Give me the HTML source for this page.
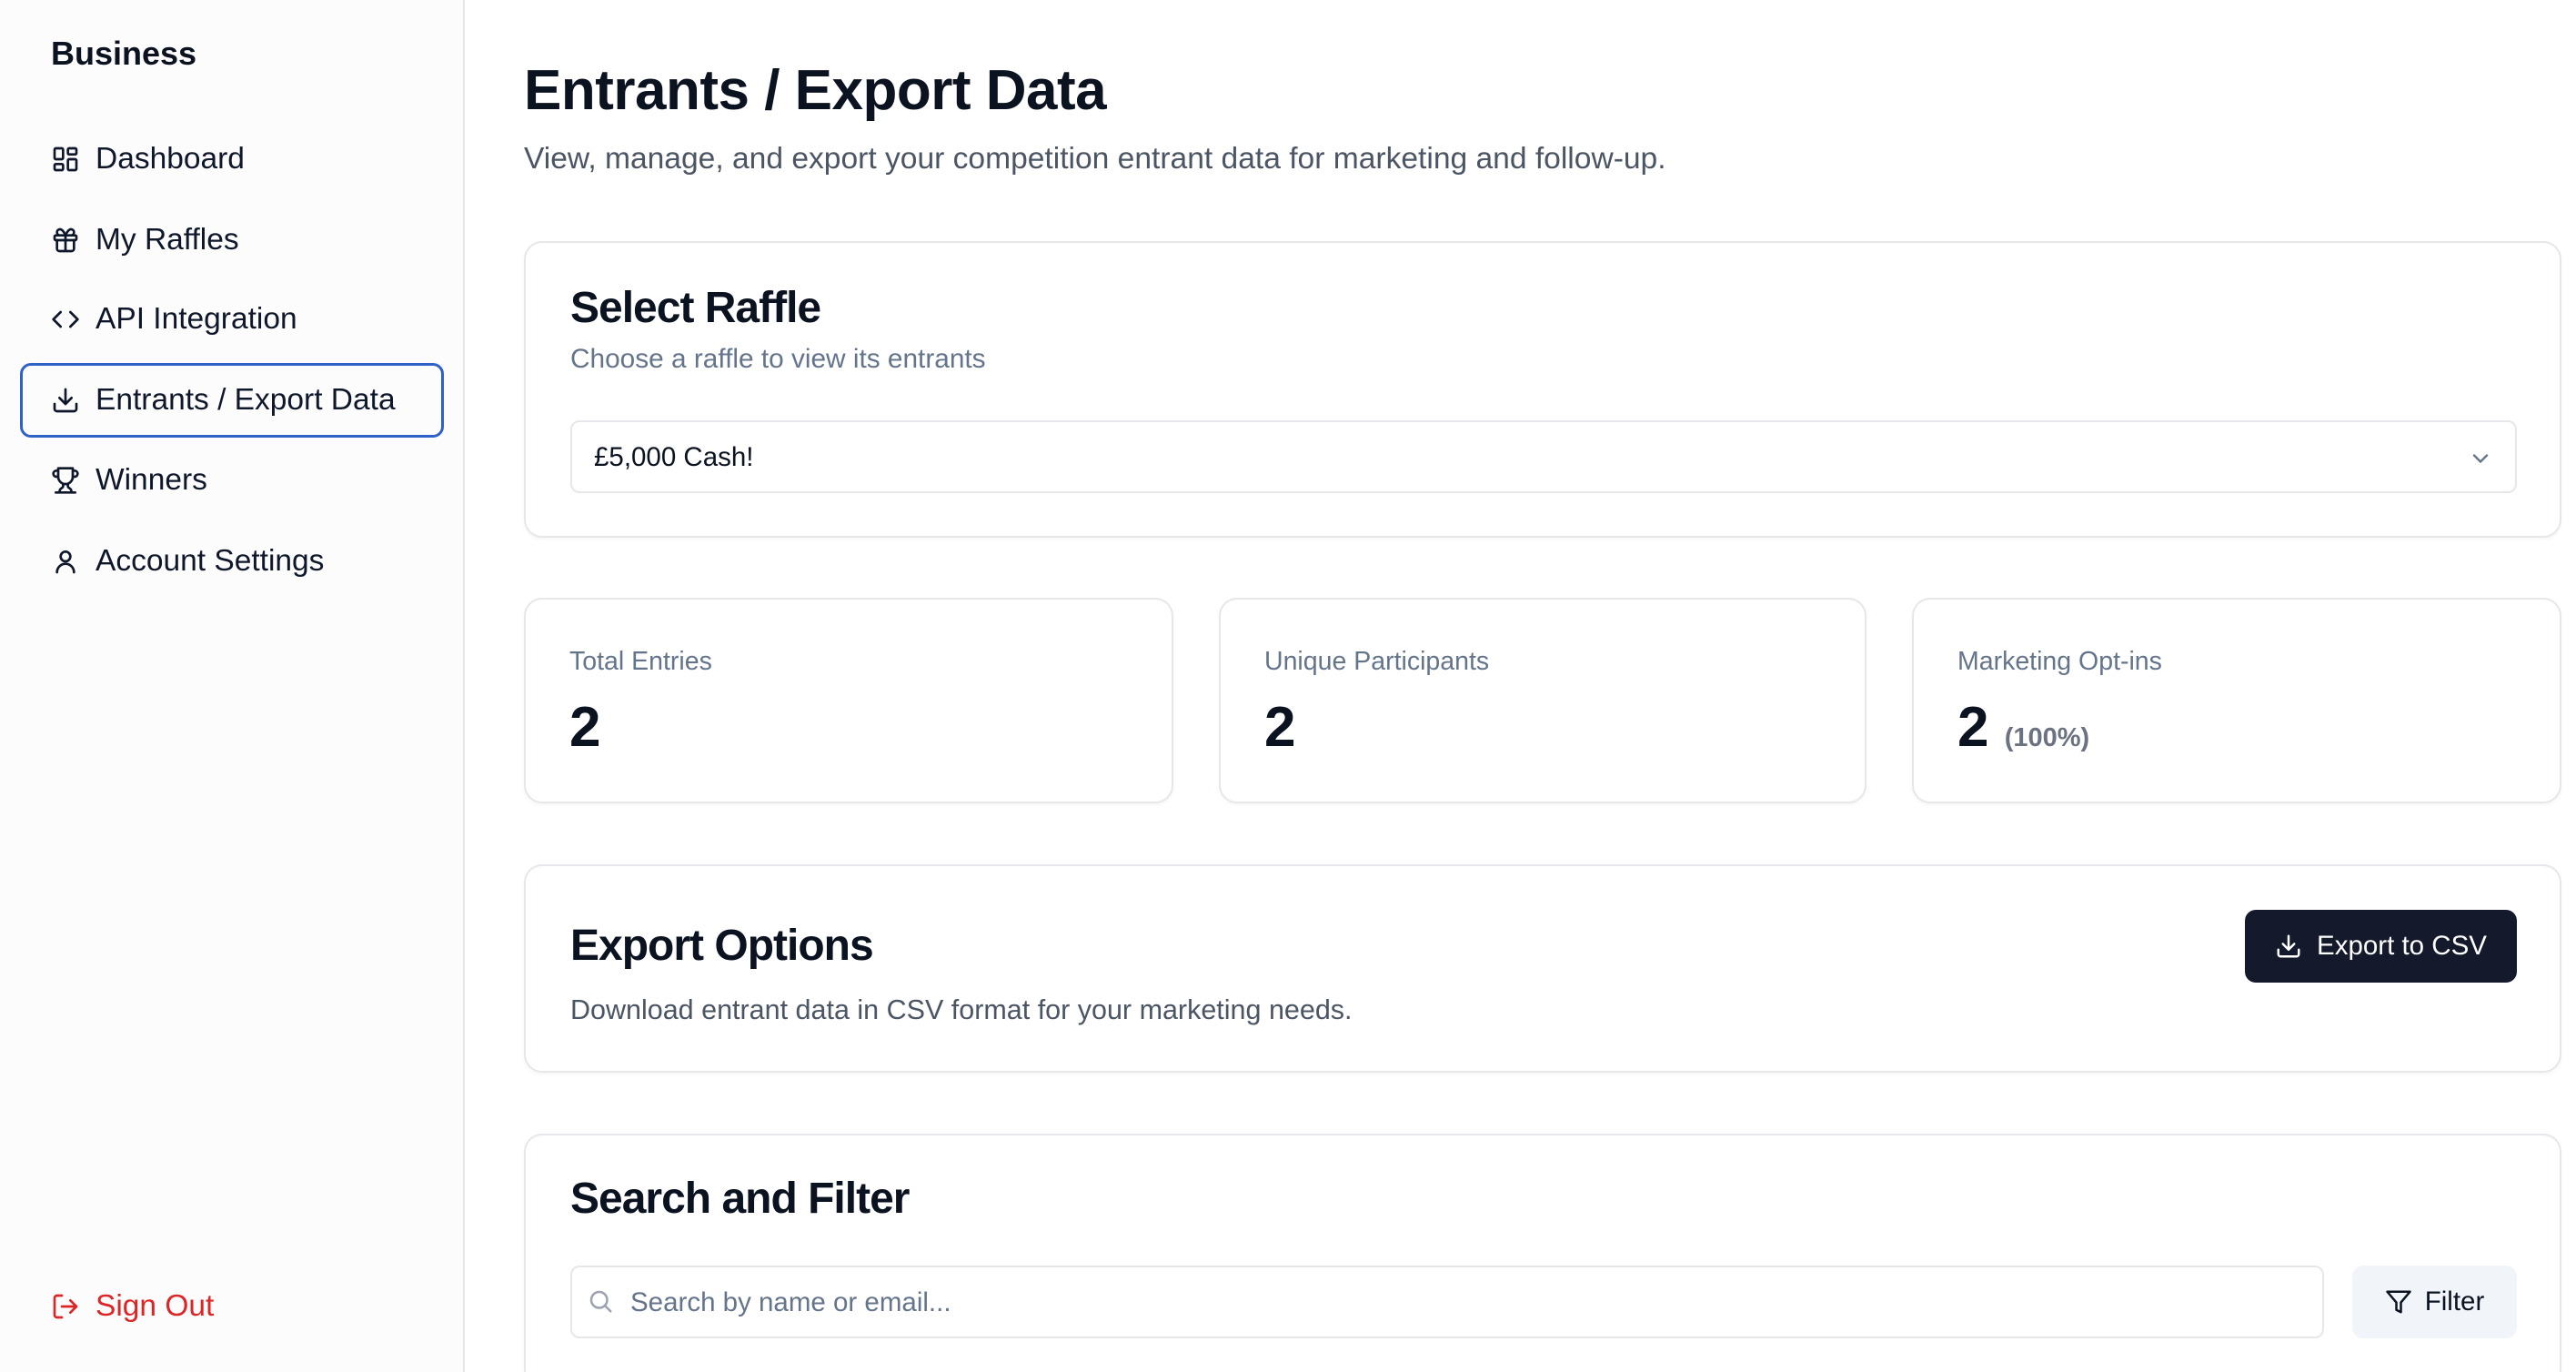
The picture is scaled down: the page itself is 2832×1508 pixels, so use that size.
<!DOCTYPE html>
<html style="width:2832px;height:1508px;overflow:hidden"><head><meta charset="utf-8"><style>
*{margin:0;padding:0;box-sizing:border-box}
body{width:2832px;height:1508px;overflow:hidden;background:#fff;font-family:"Liberation Sans",sans-serif;color:#0f172a;position:relative}
.a{position:absolute}
.side{left:0;top:0;width:511px;height:1508px;background:#fcfcfd;border-right:2px solid #e5e7eb}
.nav{position:absolute;left:56px;font-size:33.5px;color:#0f172a;display:flex;align-items:center;height:40px}
.nav svg{width:32px;height:32px;margin-right:17px;fill:none;stroke:#0f172a;stroke-width:2;stroke-linecap:round;stroke-linejoin:round}
.card{position:absolute;background:#fff;border:2px solid #e5e7eb;border-radius:20px;box-shadow:0 2px 4px rgba(0,0,0,.04)}
.h{font-weight:bold;font-size:48px;color:#0b1220;letter-spacing:-1px}
.g{color:#64748b;font-size:29px}
.lab{position:absolute;left:48px;top:52px;font-size:28.5px;color:#64748b}
.num{position:absolute;left:48px;top:105px;font-size:62px;font-weight:bold;color:#0b1220}
</style></head><body>
<div class="a side"></div>
<div class="a" style="left:56px;top:38px;font-size:36px;font-weight:bold;color:#0b1220">Business</div>

<div class="nav" style="top:155px"><svg viewBox="0 0 24 24"><rect x="3" y="3" width="7" height="9" rx="1"/><rect x="14" y="3" width="7" height="5" rx="1"/><rect x="14" y="12" width="7" height="9" rx="1"/><rect x="3" y="16" width="7" height="5" rx="1"/></svg>Dashboard</div>
<div class="nav" style="top:244px"><svg viewBox="0 0 24 24"><rect x="3" y="8" width="18" height="4" rx="1"/><path d="M12 8v13M19 12v7a2 2 0 0 1-2 2H7a2 2 0 0 1-2-2v-7M7.5 8a2.5 2.5 0 0 1 0-5C10 3 12 8 12 8s2-5 4.5-5a2.5 2.5 0 0 1 0 5"/></svg>My Raffles</div>
<div class="nav" style="top:331px"><svg viewBox="0 0 24 24"><path d="M16 18l6-6-6-6M8 6l-6 6 6 6"/></svg>API Integration</div>
<div class="a" style="left:22px;top:399px;width:466px;height:82px;border:3px solid #2f62c9;border-radius:12px"></div>
<div class="nav" style="top:420px"><svg viewBox="0 0 24 24"><path d="M21 15v4a2 2 0 0 1-2 2H5a2 2 0 0 1-2-2v-4M7 10l5 5 5-5M12 15V3"/></svg>Entrants / Export Data</div>
<div class="nav" style="top:508px"><svg viewBox="0 0 24 24"><path d="M6 9H4.5a2.5 2.5 0 0 1 0-5H6M18 9h1.5a2.5 2.5 0 0 0 0-5H18M4 22h16M10 14.66V17c0 .55-.47.98-.97 1.21C7.85 18.75 7 20.24 7 22M14 14.66V17c0 .55.47.98.97 1.21C16.15 18.75 17 20.24 17 22M18 2H6v7a6 6 0 0 0 12 0V2z"/></svg>Winners</div>
<div class="nav" style="top:597px"><svg viewBox="0 0 24 24"><circle cx="12" cy="8" r="4"/><path d="M5 21a7 7 0 0 1 14 0"/></svg>Account Settings</div>
<div class="nav" style="top:1416px;color:#dc2626"><svg viewBox="0 0 24 24" style="stroke:#dc2626"><path d="M9 21H5a2 2 0 0 1-2-2V5a2 2 0 0 1 2-2h4M16 17l5-5-5-5M21 12H9"/></svg>Sign Out</div>

<div class="a" style="left:576px;top:64px;font-size:62px;font-weight:bold;color:#0b1220;letter-spacing:-0.5px">Entrants / Export Data</div>
<div class="a" style="left:576px;top:156px;font-size:33.6px;color:#4b5563">View, manage, and export your competition entrant data for marketing and follow-up.</div>

<div class="card" style="left:576px;top:265px;width:2240px;height:326px">
<div class="a h" style="left:49px;top:44px">Select Raffle</div>
<div class="a g" style="left:49px;top:111px;font-size:29.8px">Choose a raffle to view its entrants</div>
<div class="a" style="left:49px;top:195px;width:2140px;height:80px;border:2px solid #e5e7eb;border-radius:10px">
<div class="a" style="left:24px;top:22px;font-size:29.5px;color:#0b1220">£5,000 Cash!</div>
<svg class="a" style="left:2084px;top:26px" width="28" height="28" viewBox="0 0 24 24" fill="none" stroke="#64748b" stroke-width="2" stroke-linecap="round"><path d="M6 9l6 6 6-6"/></svg>
</div></div>

<div class="card" style="left:576px;top:657px;width:714px;height:226px"><div class="lab">Total Entries</div><div class="num">2</div></div>
<div class="card" style="left:1340px;top:657px;width:712px;height:226px"><div class="lab">Unique Participants</div><div class="num">2</div></div>
<div class="card" style="left:2102px;top:657px;width:714px;height:226px"><div class="lab">Marketing Opt-ins</div><div class="num">2 <span style="font-size:29px;color:#6b7280">(100%)</span></div></div>

<div class="card" style="left:576px;top:950px;width:2240px;height:229px">
<div class="a h" style="left:49px;top:60px">Export Options</div>
<div class="a g" style="left:49px;top:141px;color:#4b5563;font-size:30.5px">Download entrant data in CSV format for your marketing needs.</div>
<div class="a" style="left:1890px;top:48px;width:299px;height:80px;background:#141a2b;border-radius:12px;color:#fff;font-size:29.5px;display:flex;align-items:center;justify-content:center">
<svg width="30" height="30" viewBox="0 0 24 24" fill="none" stroke="#fff" stroke-width="2" stroke-linecap="round" stroke-linejoin="round" style="margin-right:16px"><path d="M21 15v4a2 2 0 0 1-2 2H5a2 2 0 0 1-2-2v-4M7 10l5 5 5-5M12 15V3"/></svg>Export to CSV</div>
</div>

<div class="card" style="left:576px;top:1246px;width:2240px;height:280px">
<div class="a h" style="left:49px;top:42px">Search and Filter</div>
<div class="a" style="left:49px;top:143px;width:1928px;height:80px;border:2px solid #e5e7eb;border-radius:10px">
<svg class="a" style="left:16px;top:22px" width="30" height="30" viewBox="0 0 24 24" fill="none" stroke="#9ca3af" stroke-width="2" stroke-linecap="round"><circle cx="11" cy="11" r="7"/><path d="M21 21l-4.3-4.3"/></svg>
<div class="a" style="left:64px;top:22px;font-size:29.5px;color:#64748b">Search by name or email...</div></div>
<div class="a" style="left:2008px;top:143px;width:181px;height:80px;background:#f1f5f9;border-radius:12px;font-size:29.5px;color:#0b1220;display:flex;align-items:center;justify-content:center">
<svg width="30" height="30" viewBox="0 0 24 24" fill="none" stroke="#0b1220" stroke-width="2" stroke-linejoin="round" style="margin-right:14px"><path d="M22 3H2l8 9.46V19l4 2v-8.54L22 3z"/></svg>Filter</div>
</div>
</body></html>
